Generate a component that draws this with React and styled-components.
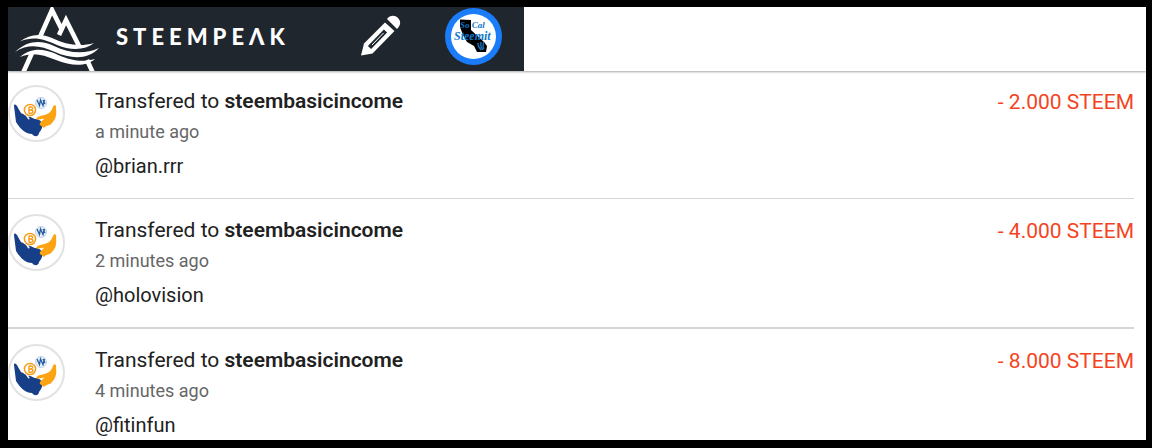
import React from 'react';
import styled, { createGlobalStyle } from 'styled-components';

const transfers = [
  { id: 1, to: 'steembasicincome', time: 'a minute ago', memo: '@brian.rrr', amount: '- 2.000 STEEM' },
  { id: 2, to: 'steembasicincome', time: '2 minutes ago', memo: '@holovision', amount: '- 4.000 STEEM' },
  { id: 3, to: 'steembasicincome', time: '4 minutes ago', memo: '@fitinfun', amount: '- 8.000 STEEM' },
];

const MountainLogo = () => (
  <svg width="86" height="64" viewBox="0 0 86 64" aria-hidden="true">
    <g fill="none" stroke="#fff" strokeWidth="4.6">
      <path d="M26 30 38 3 48 23M45 28 52 13 65 39" />
      <path d="M18 46 9 66M73 53 79 66" />
    </g>
    <g fill="#fff">
      <path d="M6 34.500C15 27 27 26 38 31 52 38 66 40 80 36 72 43 57 44 43 38 29 32 20 29 6 34.500Z" />
      <path d="M1 45C14 33 27 33 40 39 55 46 70 48 85 41 74 53 57 52 41 45 27 39 15 36 1 45Z" />
      <path d="M6 50C16 41 28 41 40 46 54 53 67 56 81 52 72 60 57 59 42 53 28 47 18 45 6 50Z" />
    </g>
  </svg>
);

const PencilIcon = () => (
  <svg width="42" height="42" viewBox="0 0 42 42" aria-hidden="true">
    <path fill="#fff" d="M1 40.500 4 28.500 25 7.500 34.500 16 12.500 38.500Z" />
    <path fill="#fff" d="M27 4C30 0 35 0 38 3 41 6 41 10 37 14Z" />
    <path d="M9.500 32.500 25.500 16" stroke="#1f262d" strokeWidth="4.500" />
    <path d="M12 30 23.500 18" stroke="#fff" strokeWidth="1" />
  </svg>
);

const SoCalAvatar = () => (
  <svg width="57" height="57" viewBox="0 0 57 57" aria-hidden="true">
    <circle cx="28.500" cy="28.500" r="28.500" fill="#1a7cf9" />
    <circle cx="28.500" cy="28.500" r="22.500" fill="#fff" />
    <path d="M15 11.500 26 12 26 22 39 34 42 38 41 44 32 44 29 38 22 34 18 27 15 19Z" fill="#000" />
    <g fill="#0f78cc" fontFamily="'Liberation Serif', serif" fontStyle="italic" fontWeight="700">
      <text x="15" y="20" fontSize="9">So Cal</text>
      <text x="9" y="32" fontSize="12">Steemit</text>
    </g>
    <path d="M33 35Q33 39 36 42M36 34Q35 39 38 42M39 34Q37 38 39 41" fill="none" stroke="#1769aa" strokeWidth="1.500" />
  </svg>
);

const HandsIcon = () => (
  <svg width="57" height="57" viewBox="0 0 57 57" aria-hidden="true">
    <circle cx="28.500" cy="28.500" r="27.500" fill="#fff" stroke="#e2e2e2" strokeWidth="2" />
    <path
      fill="#173f88"
      d="M6 21C6 18 9 20 10 23L13 28C15 29 18 30 20 34 22 36 22 32 20 32 22 31 25 34 27 34 31 34 33 36 34 38 35 42 34 44 31 48 31 51 27 53 24 49 18 49 13 45 8 37 5 29 6 21Z"
    />
    <path
      fill="#fca311"
      d="M45 22C46 19 49 20 48 24 49 31 47 35 44 38 42 41 38 40 36 43L32 40C31 38 33 37 36 34 34 33 30 36 28 34 30 30 36 31 39 29 42 28 44 25 45 22Z"
    />
    <circle cx="22" cy="25" r="5.600" fill="#fff" stroke="#f89c18" strokeWidth="1.500" />
    <path
      d="M21 22V28.500M21 22H23Q25 22.500 24.500 24 24 25 21 25M22.500 25Q25 25 25 27 24.500 28.500 21 28.500"
      fill="none"
      stroke="#f89c18"
      strokeWidth="1.400"
    />
    <circle cx="33" cy="18" r="5.500" fill="#e7f0fa" stroke="#bdd2e9" strokeWidth="1" />
    <path d="M29 15 31.500 20.500 32.500 15 35 20.500 36.500 15M35 15 37 19" fill="none" stroke="#245c9e" strokeWidth="1.300" />
  </svg>
);

const App = () => {
  return (
    <>
      <GlobalStyle />
      <StFrame>
        <StHeader>
          <StBrandBar>
            <StBrandLink href="#">
              <MountainLogo />
              <StWordmark>STEEMPEΛK</StWordmark>
            </StBrandLink>
            <StIconButton type="button" aria-label="Write a post">
              <PencilIcon />
            </StIconButton>
            <StIconButton type="button" aria-label="Account">
              <SoCalAvatar />
            </StIconButton>
          </StBrandBar>
        </StHeader>
        <StList>
          {transfers.map((item) => (
            <StRow key={item.id}>
              <HandsIcon />
              <StDetails>
                <StTitle>
                  Transfered to <StAccount href="#">{item.to}</StAccount>
                </StTitle>
                <StTime>{item.time}</StTime>
                <StMemo>{item.memo}</StMemo>
              </StDetails>
              <StAmount>{item.amount}</StAmount>
            </StRow>
          ))}
        </StList>
      </StFrame>
    </>
  );
};

export default App;

const GlobalStyle = createGlobalStyle`
  * {
    box-sizing: border-box;
  }
  body {
    margin: 0;
    background-color: #ffffff;
    font-family: Roboto, sans-serif;
    color: #212121;
  }
  svg {
    display: block;
    flex-shrink: 0;
  }
`;

const StFrame = styled.div`
  display: flex;
  flex-direction: column;
  height: 100vh;
  overflow: hidden;
  border: solid #000000;
  border-width: 7px 6px 8px 8px;
`;

const StHeader = styled.header`
  position: relative;
  flex-shrink: 0;
  margin-bottom: -1px;
  background-color: #ffffff;
  box-shadow: 0 1px 2px rgba(0, 0, 0, 0.35);
`;

const StBrandBar = styled.div`
  display: flex;
  align-items: center;
  width: fit-content;
  height: 64px;
  padding: 0 22px 0 6px;
  background-color: #1f262d;
`;

const StBrandLink = styled.a`
  display: flex;
  align-items: center;
  gap: 16px;
  width: 346px;
  color: #ffffff;
  text-decoration: none;
`;

const StWordmark = styled.span`
  font-family: Lato, sans-serif;
  font-size: 22px;
  font-weight: 900;
  line-height: 24px;
  letter-spacing: 5px;
  padding-bottom: 4px;
`;

const StIconButton = styled.button`
  display: flex;
  padding: 0;
  border: none;
  background: none;
  cursor: pointer;
  margin-bottom: 6px;

  & + & {
    margin-left: 43px;
  }
`;

const StList = styled.ul`
  margin: 0;
  padding: 0 12px 0 0;
  list-style: none;
`;

const StRow = styled.li`
  display: flex;
  align-items: flex-start;
  gap: 30px;
  padding: 15px 0 16px;
  border-bottom: 1px solid #d4d4d4;

  &:nth-child(2) {
    border-bottom-width: 2px;
  }
`;

const StDetails = styled.div`
  flex: 1;
`;

const StTitle = styled.p`
  margin: 0;
  font-size: 21px;
  line-height: 32px;
`;

const StAccount = styled.a`
  color: inherit;
  font-weight: 600;
  text-decoration: none;
`;

const StTime = styled.p`
  margin: 0;
  font-size: 18px;
  line-height: 30px;
  color: #666666;
`;

const StMemo = styled.p`
  margin: 4px 0 0;
  font-size: 20px;
  line-height: 31px;
`;

const StAmount = styled.span`
  font-size: 21px;
  line-height: 34px;
  color: #f5431f;
`;
